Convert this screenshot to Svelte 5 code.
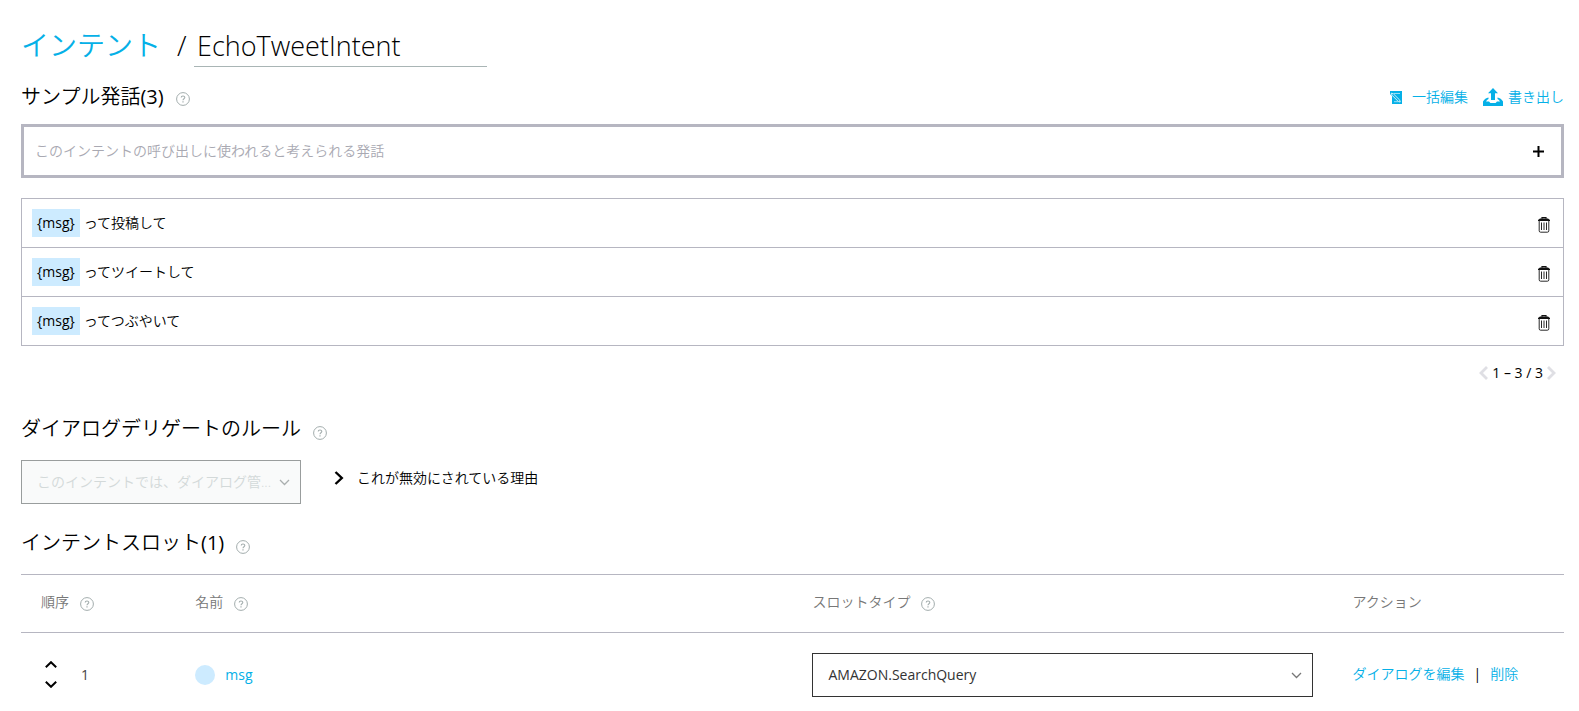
<script>
	let intentName = 'EchoTweetIntent';
	let newUtterance = '';

	let utterances = [
		{ slot: '{msg}', text: 'って投稿して' },
		{ slot: '{msg}', text: 'ってツイートして' },
		{ slot: '{msg}', text: 'ってつぶやいて' }
	];

	let slots = [{ order: 1, name: 'msg', type: 'AMAZON.SearchQuery' }];

	function addUtterance() {
		if (!newUtterance) return;
		utterances = [...utterances, { slot: '', text: newUtterance }];
		newUtterance = '';
	}

	function removeUtterance(index) {
		utterances = utterances.filter((_, i) => i !== index);
	}
</script>

{#snippet help()}
	<button class="help" aria-label="ヘルプ">
		<svg width="14" height="14" viewBox="0 0 14 14" fill="none" stroke="#a3adad">
			<circle cx="7" cy="7" r="6.4" />
			<path d="M5.2 5.6C5.2 3.4 8.8 3.4 8.8 5.5C8.8 6.8 7 6.7 7 8.3" stroke-width="1.1" />
			<path d="M7 9.3V10.5" stroke-width="1.2" />
		</svg>
	</button>
{/snippet}

{#snippet chevron()}
	<svg class="chevron" width="11" height="7" viewBox="0 0 11 7" fill="none" stroke="currentColor">
		<path d="M1 1L5.5 5.5L10 1" stroke-width="1.3" />
	</svg>
{/snippet}

<main>
	<header>
		<a class="crumb" href="#intents">インテント</a>
		<span class="slash">/</span>
		<input class="intent-name" aria-label="インテント名" bind:value={intentName} />
	</header>

	<div class="section-head">
		<h2>サンプル発話<span class="count">({utterances.length})</span></h2>
		{@render help()}
		<div class="tools">
			<a href="#bulk">
				<svg width="12" height="13" viewBox="0 0 12 13">
					<path d="M0 0H12V13H2V5L0 3Z" fill="#05b0e7" />
					<path d="M4 2.5H10M4 10.7H8" stroke="#bfeaf8" stroke-width=".8" />
					<path d="M1.2 2.2L3.4 2.8L9.8 9.2L10.2 11L8.4 10.6L2 4.2Z" stroke="#fff" stroke-width=".8" fill="#05b0e7" />
				</svg>
				一括編集
			</a>
			<a class="export" href="#export">
				<svg width="20" height="18" viewBox="0 0 20 18" fill="#05b0e7">
					<path d="M10 0L15 5.2H12V12H8V5.2H5Z" />
					<path d="M5.5 9.5Q2 10 0 13.5V18H20V13.5Q18 10 14.5 9.5V11Q16.2 11.5 17 13.5H14L12.6 15H7.4L6 13.5H3Q3.8 11.5 5.5 11Z" />
				</svg>
				書き出し
			</a>
		</div>
	</div>

	<div class="new-utterance">
		<input
			aria-label="発話"
			placeholder="このインテントの呼び出しに使われると考えられる発話"
			bind:value={newUtterance}
		/>
		<button aria-label="追加" on:click={addUtterance}>
			<svg width="11" height="11" viewBox="0 0 11 11" stroke="#000" stroke-width="2">
				<path d="M5.5 0V11M0 5.5H11" />
			</svg>
		</button>
	</div>

	<ul class="utterances">
		{#each utterances as utterance, i}
			<li>
				<span class="token">{utterance.slot}</span>
				<span class="words">{utterance.text}</span>
				<button aria-label="削除" on:click={() => removeUtterance(i)}>
					<svg width="12" height="16" viewBox="0 0 12 16" fill="none" stroke="#111">
						<path d="M4 1.8V.6H8V1.8" stroke-width="1.2" />
						<path d="M0 4V3L2 1.6H10L12 3V4Z" fill="#111" stroke="none" />
						<path d="M1.2 4V13.8Q1.2 15.2 2.6 15.2H9.4Q10.8 15.2 10.8 13.8V4" stroke-width=".9" />
						<path d="M3.5 5.5V13M6 5.5V13M8.5 5.5V13" stroke-width=".9" />
					</svg>
				</button>
			</li>
		{/each}
	</ul>

	<nav class="pager">
		<button aria-label="前へ">
			<svg width="9" height="14" viewBox="0 0 9 14" fill="none" stroke="#dfdfe4" stroke-width="2.8">
				<path d="M8 1L2 7L8 13" />
			</svg>
		</button>
		<span>1 – {utterances.length} / {utterances.length}</span>
		<button aria-label="次へ">
			<svg width="9" height="14" viewBox="0 0 9 14" fill="none" stroke="#dfdfe4" stroke-width="2.8">
				<path d="M1 1L7 7L1 13" />
			</svg>
		</button>
	</nav>

	<div class="section-head low">
		<h2>ダイアログデリゲートのルール</h2>
		{@render help()}
	</div>

	<div class="delegation">
		<div class="select disabled">
			<select aria-label="ダイアログデリゲートのルール" disabled>
				<option>このインテントでは、ダイアログ管...</option>
			</select>
			{@render chevron()}
		</div>
		<button class="reason">
			<svg width="10" height="14" viewBox="0 0 10 14" fill="none" stroke="#000" stroke-width="2.4">
				<path d="M1.5 1L7.8 7L1.5 13" />
			</svg>
			これが無効にされている理由
		</button>
	</div>

	<div class="section-head low slots-head">
		<h2>インテントスロット<span class="count">({slots.length})</span></h2>
		{@render help()}
	</div>

	<table>
		<thead>
			<tr>
				<th class="order"><div class="cell">順序{@render help()}</div></th>
				<th class="name"><div class="cell">名前{@render help()}</div></th>
				<th class="type"><div class="cell">スロットタイプ{@render help()}</div></th>
				<th class="action"><div class="cell">アクション</div></th>
			</tr>
		</thead>
		<tbody>
			{#each slots as slot}
				<tr>
					<td>
						<div class="cell">
							<div class="arrows">
								<button aria-label="上へ">
									<svg width="12" height="7" viewBox="0 0 12 7" fill="none" stroke="#000" stroke-width="2">
										<path d="M.8 6.2L6 1.2L11.2 6.2" />
									</svg>
								</button>
								<button aria-label="下へ">
									<svg width="12" height="7" viewBox="0 0 12 7" fill="none" stroke="#000" stroke-width="2">
										<path d="M.8 .8L6 5.8L11.2 .8" />
									</svg>
								</button>
							</div>
							<span class="number">{slot.order}</span>
						</div>
					</td>
					<td>
						<div class="cell">
							<span class="dot"></span>
							<a class="slot-name" href="#slot">{slot.name}</a>
						</div>
					</td>
					<td>
						<div class="select">
							<select aria-label="スロットタイプ">
								<option>{slot.type}</option>
							</select>
							{@render chevron()}
						</div>
					</td>
					<td>
						<div class="cell actions">
							<a href="#dialog">ダイアログを編集</a>
							<span class="bar">|</span>
							<a href="#delete">削除</a>
						</div>
					</td>
				</tr>
			{/each}
		</tbody>
	</table>
</main>

<style>
	:global(body) {
		margin: 0;
		background: #fff;
	}

	main {
		padding: 24px 15px 0 21px;
		color: #000;
		font-family: 'Open Sans', 'Noto Sans CJK JP', sans-serif;
		font-size: 14px;
		font-weight: 350;
		line-height: 20px;
	}

	input,
	select,
	button {
		box-sizing: border-box;
		margin: 0;
		padding: 0;
		border: 0;
		border-radius: 0;
		background: none;
		color: inherit;
		font: inherit;
	}

	button {
		display: flex;
		align-items: center;
		cursor: pointer;
	}

	svg {
		display: block;
		flex: none;
	}

	a {
		color: #05b0e7;
		text-decoration: none;
	}

	header {
		display: flex;
		height: 43px;
		font-size: 28px;
		line-height: 42px;
	}

	.crumb {
		font-weight: 350;
	}

	.slash {
		width: 17px;
		margin-left: 16px;
		font-weight: 300;
	}

	.intent-name {
		width: 293px;
		padding: 2px 3px 0;
		border-bottom: 1px solid #a9b5b5;
		font-size: 27px;
		font-weight: 300;
	}

	.section-head {
		display: flex;
		align-items: center;
		gap: 12px;
		height: 30px;
		margin-top: 15px;
	}

	h2 {
		margin: 0;
		font-size: 20px;
		font-weight: 350;
		line-height: 30px;
	}

	.count,
	.token,
	.pager,
	.number,
	.slot-name,
	td .select,
	.bar {
		font-weight: 400;
	}

	.help {
		margin-top: 4px;
	}

	.tools {
		display: flex;
		gap: 15px;
		margin-left: auto;
	}

	.tools a {
		display: flex;
		align-items: center;
		gap: 10px;
	}

	.tools .export {
		gap: 5px;
	}

	.new-utterance {
		display: flex;
		align-items: center;
		height: 48px;
		margin-top: 12px;
		border: 3px solid #b6b6c1;
	}

	.new-utterance input {
		flex: 1;
		height: 48px;
		padding: 0 11px 2px;
		outline: none;
	}

	.new-utterance input::placeholder {
		color: #a9a9b2;
		opacity: 1;
	}

	.new-utterance button {
		padding: 8px 17px;
	}

	.utterances {
		margin: 20px 0 0;
		padding: 0;
		border: 1px solid #b6b6c1;
		list-style: none;
	}

	.utterances li {
		display: flex;
		align-items: center;
		height: 48px;
		padding: 0 13px 0 10px;
	}

	.utterances li + li {
		border-top: 1px solid #b6b6c1;
	}

	.token {
		padding: 4px 5px;
		background: #cdebff;
	}

	.words {
		margin-left: 4px;
	}

	.utterances button {
		margin: 4px 0 0 auto;
	}

	.pager {
		display: flex;
		justify-content: flex-end;
		align-items: center;
		gap: 4px;
		margin: 17px 8px 0 0;
	}

	.low {
		margin-top: 31px;
	}

	.low .help {
		margin-top: 8px;
	}

	.delegation {
		display: flex;
		align-items: center;
		gap: 33px;
		margin-top: 16px;
	}

	.select {
		position: relative;
		color: #333;
	}

	.select select {
		width: 100%;
		height: 44px;
		padding: 0 30px 0 15px;
		border: 1px solid #333;
		appearance: none;
	}

	.chevron {
		position: absolute;
		top: 19px;
		right: 11px;
		color: #777;
		pointer-events: none;
	}

	.disabled {
		width: 280px;
	}

	.disabled select {
		padding-right: 24px;
		border-color: #999d9d;
		background: #f9fafa;
		color: #d3d9d9;
		opacity: 1;
	}

	.disabled .chevron {
		color: #aaafaf;
	}

	.reason {
		gap: 13px;
		margin-bottom: 8px;
	}

	.slots-head {
		margin-top: 24px;
	}

	table {
		width: 100%;
		margin-top: 16px;
		border-collapse: collapse;
		table-layout: fixed;
	}

	th,
	td {
		box-sizing: border-box;
		padding: 0 20px;
	}

	th {
		height: 58px;
		padding-bottom: 4px;
		border-top: 1px solid #b6b6c1;
		border-bottom: 1px solid #b6b6c1;
		color: #777;
		font-weight: 350;
		text-align: left;
	}

	td {
		height: 84px;
	}

	.order {
		width: 10%;
	}

	.name {
		width: 40%;
	}

	.type {
		width: 35%;
	}

	.action {
		width: 15%;
	}

	.cell {
		display: flex;
		align-items: center;
		white-space: nowrap;
	}

	th .help {
		margin-left: 11px;
	}

	.arrows {
		display: grid;
		gap: 13px;
		margin: 0 24px 0 4px;
	}

	.number {
		color: #444;
	}

	.dot {
		width: 20px;
		height: 20px;
		margin-right: 10px;
		border-radius: 50%;
		background: #cdebff;
	}

	.actions {
		gap: 9px;
		padding-bottom: 2px;
	}
</style>
